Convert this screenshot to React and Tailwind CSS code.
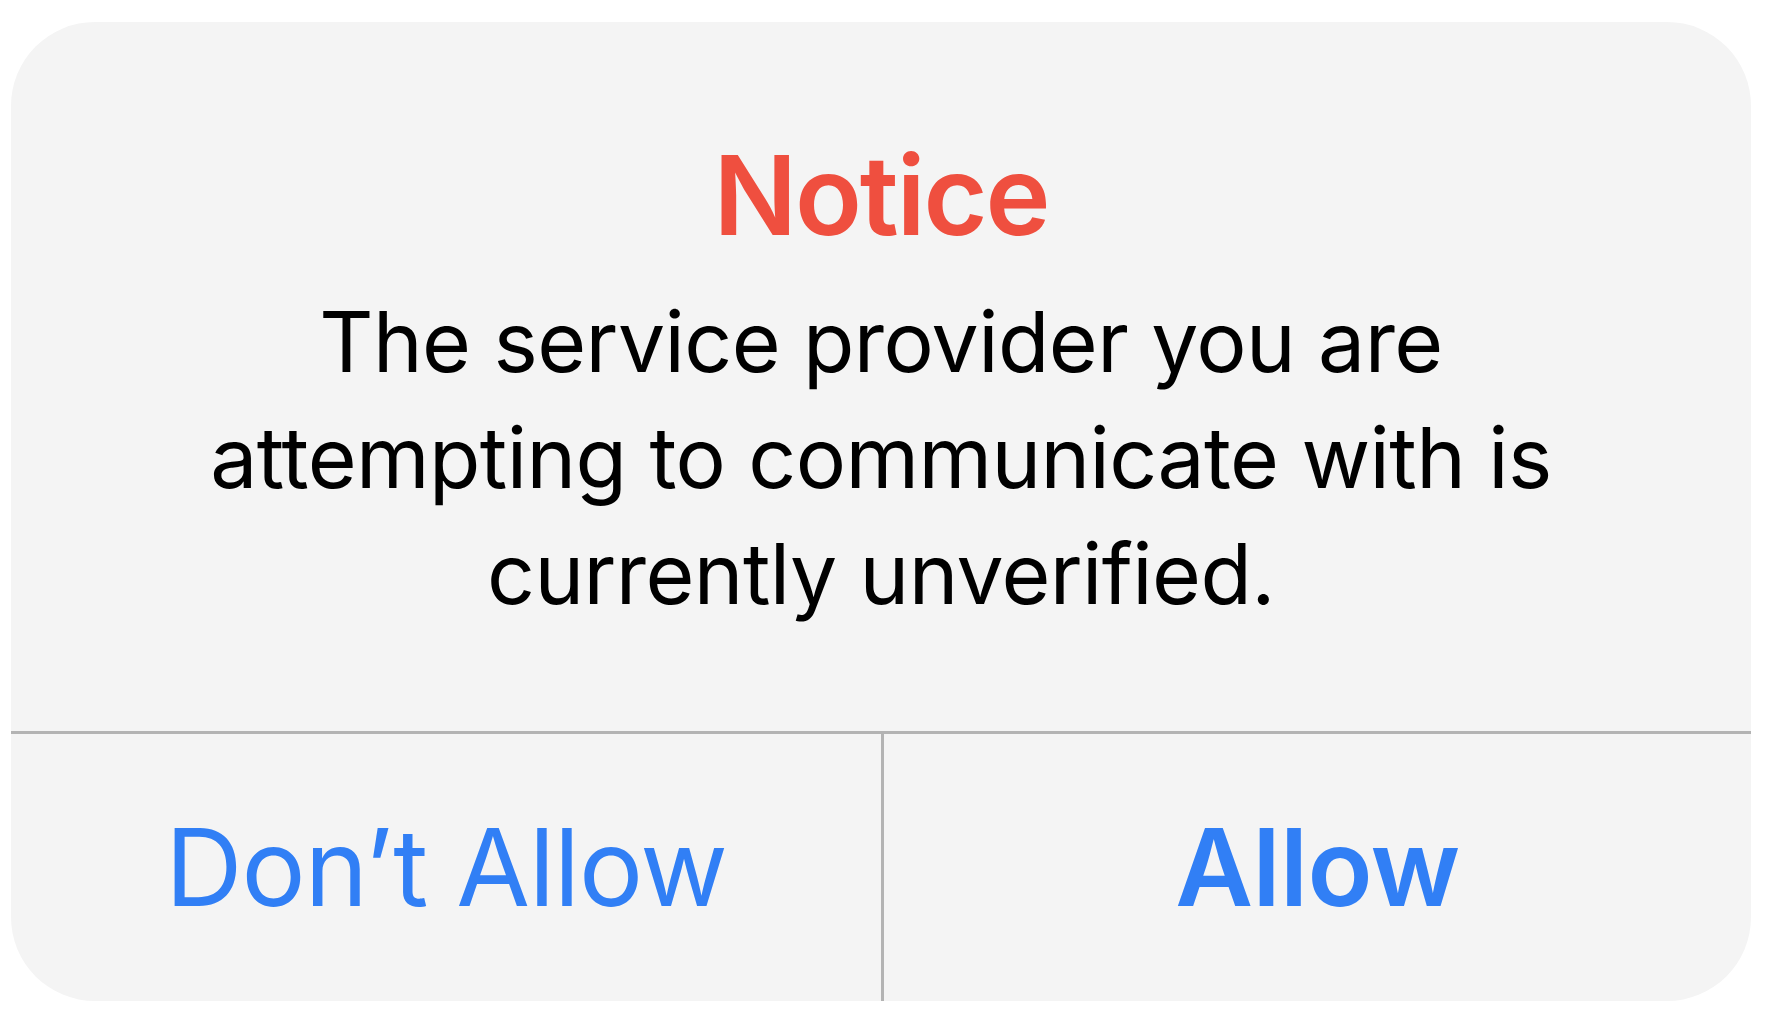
import { useState } from "react";

// Alert sheet: title + message on top, two-button action row below a hairline.
const font = "font-['Inter','Roboto','Liberation_Sans',sans-serif]";

export default function App() {
    const [choice, setChoice] = useState(null);

    return (
        <div className={`min-h-screen bg-white pl-[11px] pt-[22px] ${font}`}>
            <div className="flex h-[979px] w-[1740px] flex-col overflow-hidden rounded-[84px] bg-[#f4f4f4]">
                <div className="flex h-[709px] shrink-0 flex-col items-center pt-[118px]">
                    <h1 className="text-[110px] font-semibold leading-[110px] tracking-[-2px] text-[#ef4f3f]">Notice</h1>
                    <p className="mt-[34px] max-w-[1400px] text-center text-[84px] leading-[116px] tracking-[-0.6px] text-black">
                        The service provider you are attempting to communicate with is currently unverified.
                    </p>
                </div>

                <div className="grid flex-1 grid-cols-2 border-t-[3px] border-[#b3b3b3]">
                    <button
                        type="button"
                        onClick={() => setChoice("deny")}
                        className="flex items-center justify-center text-[107px] leading-none tracking-[-1px] text-[#317ff5]"
                    >
                        Don’t Allow
                    </button>
                    <button
                        type="button"
                        onClick={() => setChoice("allow")}
                        className="flex items-center justify-center border-l-[3px] border-[#b3b3b3] text-[107px] font-semibold leading-none tracking-[-0.5px] text-[#317ff5]"
                    >
                        Allow
                    </button>
                </div>
            </div>
            {choice && <span className="sr-only">{choice}</span>}
        </div>
    );
}
